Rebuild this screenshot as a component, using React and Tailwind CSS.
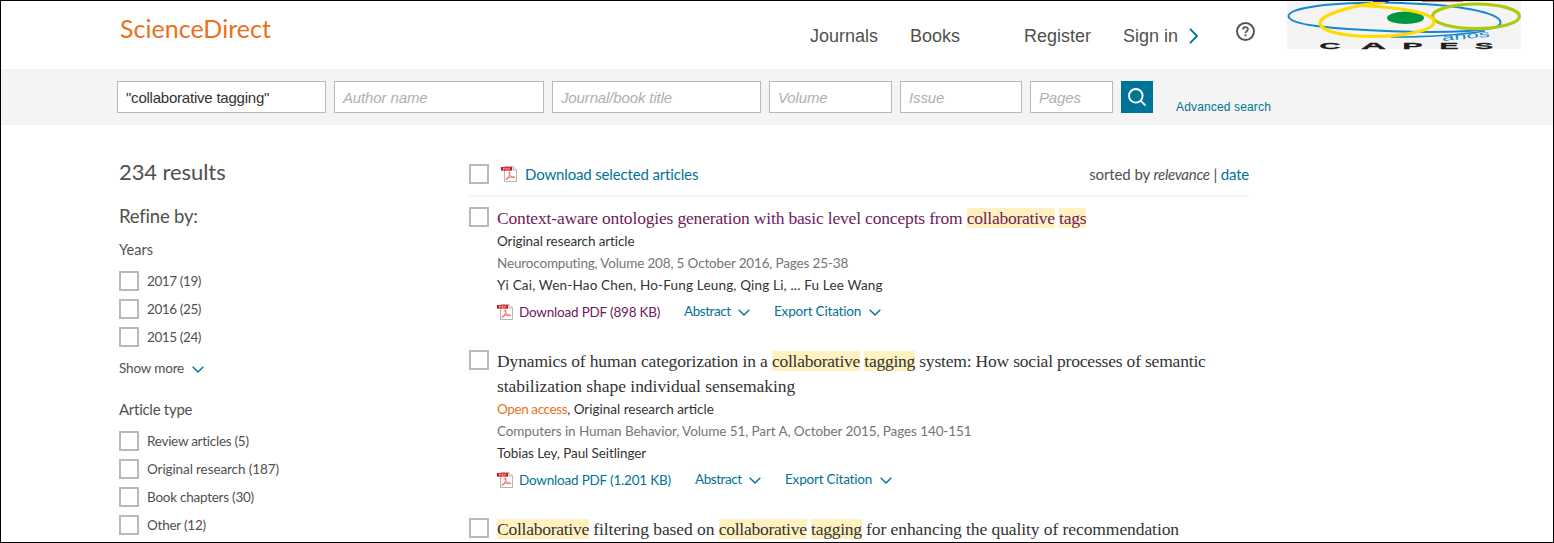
const serif = "font-['Liberation_Serif',serif]";

function Checkbox() {
  return <span className="block size-5 shrink-0 border-2 border-[#b9b9b9] bg-white" />;
}

function Chevron() {
  return (
    <svg className="h-[7px] w-3" viewBox="0 0 12 7" fill="none" stroke="#007398" strokeWidth="1.4">
      <path d="M.7.8 6 6 11.3.8" />
    </svg>
  );
}

function PdfIcon() {
  return (
    <svg className="h-4 w-4 shrink-0" viewBox="0 0 16 16">
      <path d="M3.5.5h8.5l3.500 3.500v11.500h-12z" fill="#fff" stroke="#b5b5b5" />
      <path d="M12 .5V4h3.500" fill="#eee" stroke="#b5b5b5" />
      <rect y="1" width="11" height="3.600" fill="#d80f14" />
      <path
        d="M2.500 3.800V1.900h1.200v1H2.500M5 1.900v1.700h1.200V1.900zM7.800 3.800V1.900h1.300M7.800 2.900h1.100"
        fill="none"
        stroke="#fff"
        strokeWidth=".5"
      />
      <path
        d="M5 13.700c1.200 0 4.200-4.700 3.700-7.500-.2-.8-1-.5-.8.4.4 2.700 2.900 5.400 5 5.400 1.300 0 1-1.200-.3-1.300-2.500-.2-7.600 1.400-7.900 2.500z"
        fill="none"
        stroke="#f0564f"
        strokeWidth=".9"
      />
    </svg>
  );
}

function CapesLogo() {
  return (
    <svg className="h-12 w-[234px] shrink-0 overflow-visible" viewBox="0 0 234 48">
      <rect width="234" height="48" fill="#f4f4f4" />
      <path
        d="M90 1.500C40 2 1.500 7 1.500 15c0 7 28 11 60 13 45 3 85 4 120 2 22-1.500 33-4 32-9-2-10-45-17-90-18.500-12-.6-22-1-33-1"
        fill="none"
        stroke="#1388d0"
        strokeWidth="2"
      />
      <path d="M104 36c35 0 68-2 94-6" fill="none" stroke="#1388d0" strokeWidth="1.600" />
      <ellipse cx="118.500" cy="16.800" rx="18.500" ry="6.200" fill="#009640" />
      <ellipse cx="189" cy="15.300" rx="43.500" ry="12.300" fill="none" stroke="#aac90f" strokeWidth="3.200" />
      <path
        d="M98 1C65 4 33 14 33 22c0 8 23 13.500 53 13.500 35 0 61-7 61-14.500 0-9-32-15-79-16.500"
        fill="none"
        stroke="#ffdb00"
        strokeWidth="3.200"
      />
      <path d="M86 .5h16" stroke="#1f2be0" />
      <path d="M135 .5h41" stroke="#c7562a" strokeWidth=".8" />
      <text
        x="155"
        y="38"
        textLength="48"
        lengthAdjust="spacingAndGlyphs"
        transform="rotate(-5 178 36)"
        fontFamily="Liberation Sans"
        fontSize="9"
        fill="#1388d0"
      >
        anos
      </text>
      <g fontFamily="Liberation Sans" fontWeight="700" fontSize="9" fill="#1d1d1b" stroke="#1d1d1b" strokeWidth=".3">
        <text x="32.500" y="47.700" textLength="21" lengthAdjust="spacingAndGlyphs">C</text>
        <text x="74" y="47.700" textLength="25" lengthAdjust="spacingAndGlyphs">A</text>
        <text x="115.500" y="47.700" textLength="20" lengthAdjust="spacingAndGlyphs">P</text>
        <text x="152.500" y="47.700" textLength="19" lengthAdjust="spacingAndGlyphs">E</text>
        <text x="188" y="47.700" textLength="18" lengthAdjust="spacingAndGlyphs">S</text>
      </g>
    </svg>
  );
}

function Header() {
  return (
    <header className="flex h-[68px] items-start font-['Liberation_Sans',sans-serif] text-lg leading-[26px] text-[#505050]">
      <h1 className="ml-[119px] mt-[11px] w-[690px] font-['Lato',sans-serif] text-[25px] leading-8 tracking-[0.03px] text-[#e9711c]">
        ScienceDirect
      </h1>
      <nav className="mt-[22px] flex h-[26px] items-center">
        <a className="w-[100px]">Journals</a>
        <a className="w-[114px]">Books</a>
        <a className="w-[99px]">Register</a>
        <a className="w-[66px]">Sign in</a>
        <svg className="h-4 w-[9px]" viewBox="0 0 9 16" fill="none" stroke="#007398" strokeWidth="1.800">
          <path d="M1 .8 8 8l-7 7.200" />
        </svg>
      </nav>
      <svg className="ml-[38px] mt-[21px] size-[19px]" viewBox="0 0 19 19" fill="none" stroke="#505050">
        <circle cx="9.500" cy="9.500" r="8.500" strokeWidth="1.900" />
        <path d="M7 7.500C7 4.300 12 4.300 12 7.300c0 1.700-2.500 1.900-2.500 3.900" strokeWidth="1.700" />
        <path d="M9.500 12.400v1.900" strokeWidth="1.900" />
      </svg>
      <div className="ml-8">
        <CapesLogo />
      </div>
    </header>
  );
}

function Field({ width, children, filled }) {
  return (
    <div
      className={`flex h-8 shrink-0 items-center border border-[#b9b9b9] bg-white pl-2 pt-0.5 text-[15px] ${width} ${
        filled ? "tracking-[-0.22px] text-[#333]" : "italic tracking-[-0.13px] text-[#b0b0b0]"
      }`}
    >
      {children}
    </div>
  );
}

function SearchBar() {
  return (
    <div className="flex h-14 items-center gap-2 bg-[#f4f4f4] pl-[116px] font-['Liberation_Sans',sans-serif]">
      <Field width="w-[209px]" filled>&quot;collaborative tagging&quot;</Field>
      <Field width="w-[210px]">Author name</Field>
      <Field width="w-[209px]">Journal/book title</Field>
      <Field width="w-[123px]">Volume</Field>
      <Field width="w-[122px]">Issue</Field>
      <Field width="w-[83px]">Pages</Field>
      <button className="flex size-8 items-center justify-center bg-[#007398]">
        <svg className="size-[18px]" viewBox="0 0 18 18" fill="none" stroke="#fff" strokeWidth="1.900">
          <circle cx="7.800" cy="7.800" r="6.800" />
          <path d="m12.600 12.600 4.900 4.900" />
        </svg>
      </button>
      <a className="ml-[15px] mt-5 text-xs leading-4 tracking-[0.15px] text-[#007398]">Advanced search</a>
    </div>
  );
}

function Facet({ children, track }) {
  return (
    <li className="flex h-7 items-start gap-2">
      <Checkbox />
      <span className={`leading-5 ${track}`}>{children}</span>
    </li>
  );
}

function Sidebar() {
  return (
    <aside className="w-[350px] shrink-0 text-[13.5px] text-[#505050]">
      <h2 className="mt-[31px] text-[22px] leading-8 tracking-[-0.08px]">234 results</h2>
      <h3 className="mt-[14px] text-[18.5px] leading-7 tracking-[-0.2px]">Refine by:</h3>
      <h4 className="mt-[10px] text-[14.5px] leading-5 tracking-[0.07px]">Years</h4>
      <ul className="mt-[11px]">
        <Facet track="tracking-[-0.4px]">2017 (19)</Facet>
        <Facet track="tracking-[-0.4px]">2016 (25)</Facet>
        <Facet track="tracking-[-0.4px]">2015 (24)</Facet>
      </ul>
      <div className="mt-[3px] flex h-5 items-center gap-2">
        <span className="tracking-[-0.17px]">Show more</span>
        <span className="pt-[3px]"><Chevron /></span>
      </div>
      <h4 className="mt-[21px] text-[15px] leading-5 tracking-[-0.27px]">Article type</h4>
      <ul className="mt-3">
        <Facet track="tracking-[-0.27px]">Review articles (5)</Facet>
        <Facet track="tracking-[-0.1px]">Original research (187)</Facet>
        <Facet track="tracking-[-0.25px]">Book chapters (30)</Facet>
        <Facet track="tracking-[-0.23px]">Other (12)</Facet>
      </ul>
    </aside>
  );
}

function Mark({ children }) {
  return <mark className="bg-[#fff2c0] tracking-[-0.25px] text-inherit">{children}</mark>;
}

function TitleLine({ track, color = "text-[#333]", children }) {
  return (
    <span className={`block h-[25px] whitespace-nowrap text-[17.5px] leading-[25px] ${serif} ${track} ${color}`}>
      {children}
    </span>
  );
}

function Actions({ size, visited, width }) {
  return (
    <div className="mt-[3px] flex h-[26px] items-center text-[#007398]">
      <PdfIcon />
      <a className={`ml-[6px] tracking-[-0.2px] ${width} ${visited ? "text-[#6e1a5c]" : ""}`}>Download PDF ({size})</a>
      <a className="w-[54px] pb-0.5 tracking-[-0.45px]">Abstract</a>
      <span className="pt-px"><Chevron /></span>
      <a className="ml-6 w-[95px] pb-0.5 tracking-[-0.19px]">Export Citation</a>
      <span className="pt-px"><Chevron /></span>
    </div>
  );
}

function Article({ children }) {
  return (
    <article className="mb-6 flex gap-2">
      <div className="pt-px">
        <Checkbox />
      </div>
      <div className="leading-[22px]">{children}</div>
    </article>
  );
}

function Details({ children }) {
  return <div className="-mt-px">{children}</div>;
}

function Results() {
  return (
    <main className="w-[780px] shrink-0 whitespace-nowrap text-[13.5px] text-[#333]">
      <div className="flex h-[72px] items-end border-b-2 border-[#f4f4f4] pb-[11px]">
        <Checkbox />
        <div className="ml-3 flex h-5 items-center">
          <PdfIcon />
          <a className="ml-2 text-[15px] tracking-[-0.15px] text-[#007398]">Download selected articles</a>
        </div>
        <p className="ml-auto text-[15px] leading-5 tracking-[-0.1px] text-[#505050]">
          sorted by <i className="tracking-[-0.3px]">relevance</i> | <a className="tracking-[-0.2px] text-[#007398]">date</a>
        </p>
      </div>
      <div className="pt-[9px]">
        <Article>
          <TitleLine track="tracking-[-0.17px]" color="text-[#6e1a5c]">
            Context-aware ontologies generation with basic level concepts from <Mark>collaborative</Mark> <Mark>tags</Mark>
          </TitleLine>
          <Details>
            <p className="tracking-[-0.1px]">Original research article</p>
            <p className="tracking-[-0.16px] text-[#757575]">Neurocomputing, Volume 208, 5 October 2016, Pages 25-38</p>
            <p className="tracking-[0.18px]">Yi Cai, Wen-Hao Chen, Ho-Fung Leung, Qing Li, ... Fu Lee Wang</p>
          </Details>
          <Actions size="898 KB" visited width="w-[165px]" />
        </Article>
        <Article>
          <TitleLine track="tracking-[-0.19px]">
            <span className="tracking-[-0.13px]">Dynamics of human categorization in a </span>
            <Mark>collaborative</Mark> <Mark>tagging</Mark> system: How social processes of semantic
          </TitleLine>
          <TitleLine track="tracking-[-0.04px]">stabilization shape individual sensemaking</TitleLine>
          <Details>
            <p>
              <span className="tracking-[-0.4px] text-[#e9711c]">Open access</span>, Original research article
            </p>
            <p className="tracking-[-0.09px] text-[#757575]">
              Computers in Human Behavior, Volume 51, Part A, October 2015, Pages 140-151
            </p>
            <p className="tracking-[-0.08px]">Tobias Ley, Paul Seitlinger</p>
          </Details>
          <Actions size="1.201 KB" width="w-[176px]" />
        </Article>
        <Article>
          <TitleLine track="tracking-[-0.08px]">
            <Mark>Collaborative</Mark> filtering based on <Mark>collaborative</Mark> <Mark>tagging</Mark> for enhancing the quality of
            recommendation
          </TitleLine>
        </Article>
      </div>
    </main>
  );
}

export default function App() {
  return (
    <div className="h-[543px] w-[1554px] overflow-hidden border border-black bg-white font-['Lato',sans-serif]">
      <Header />
      <SearchBar />
      <div className="flex pl-[118px]">
        <Sidebar />
        <Results />
      </div>
    </div>
  );
}
